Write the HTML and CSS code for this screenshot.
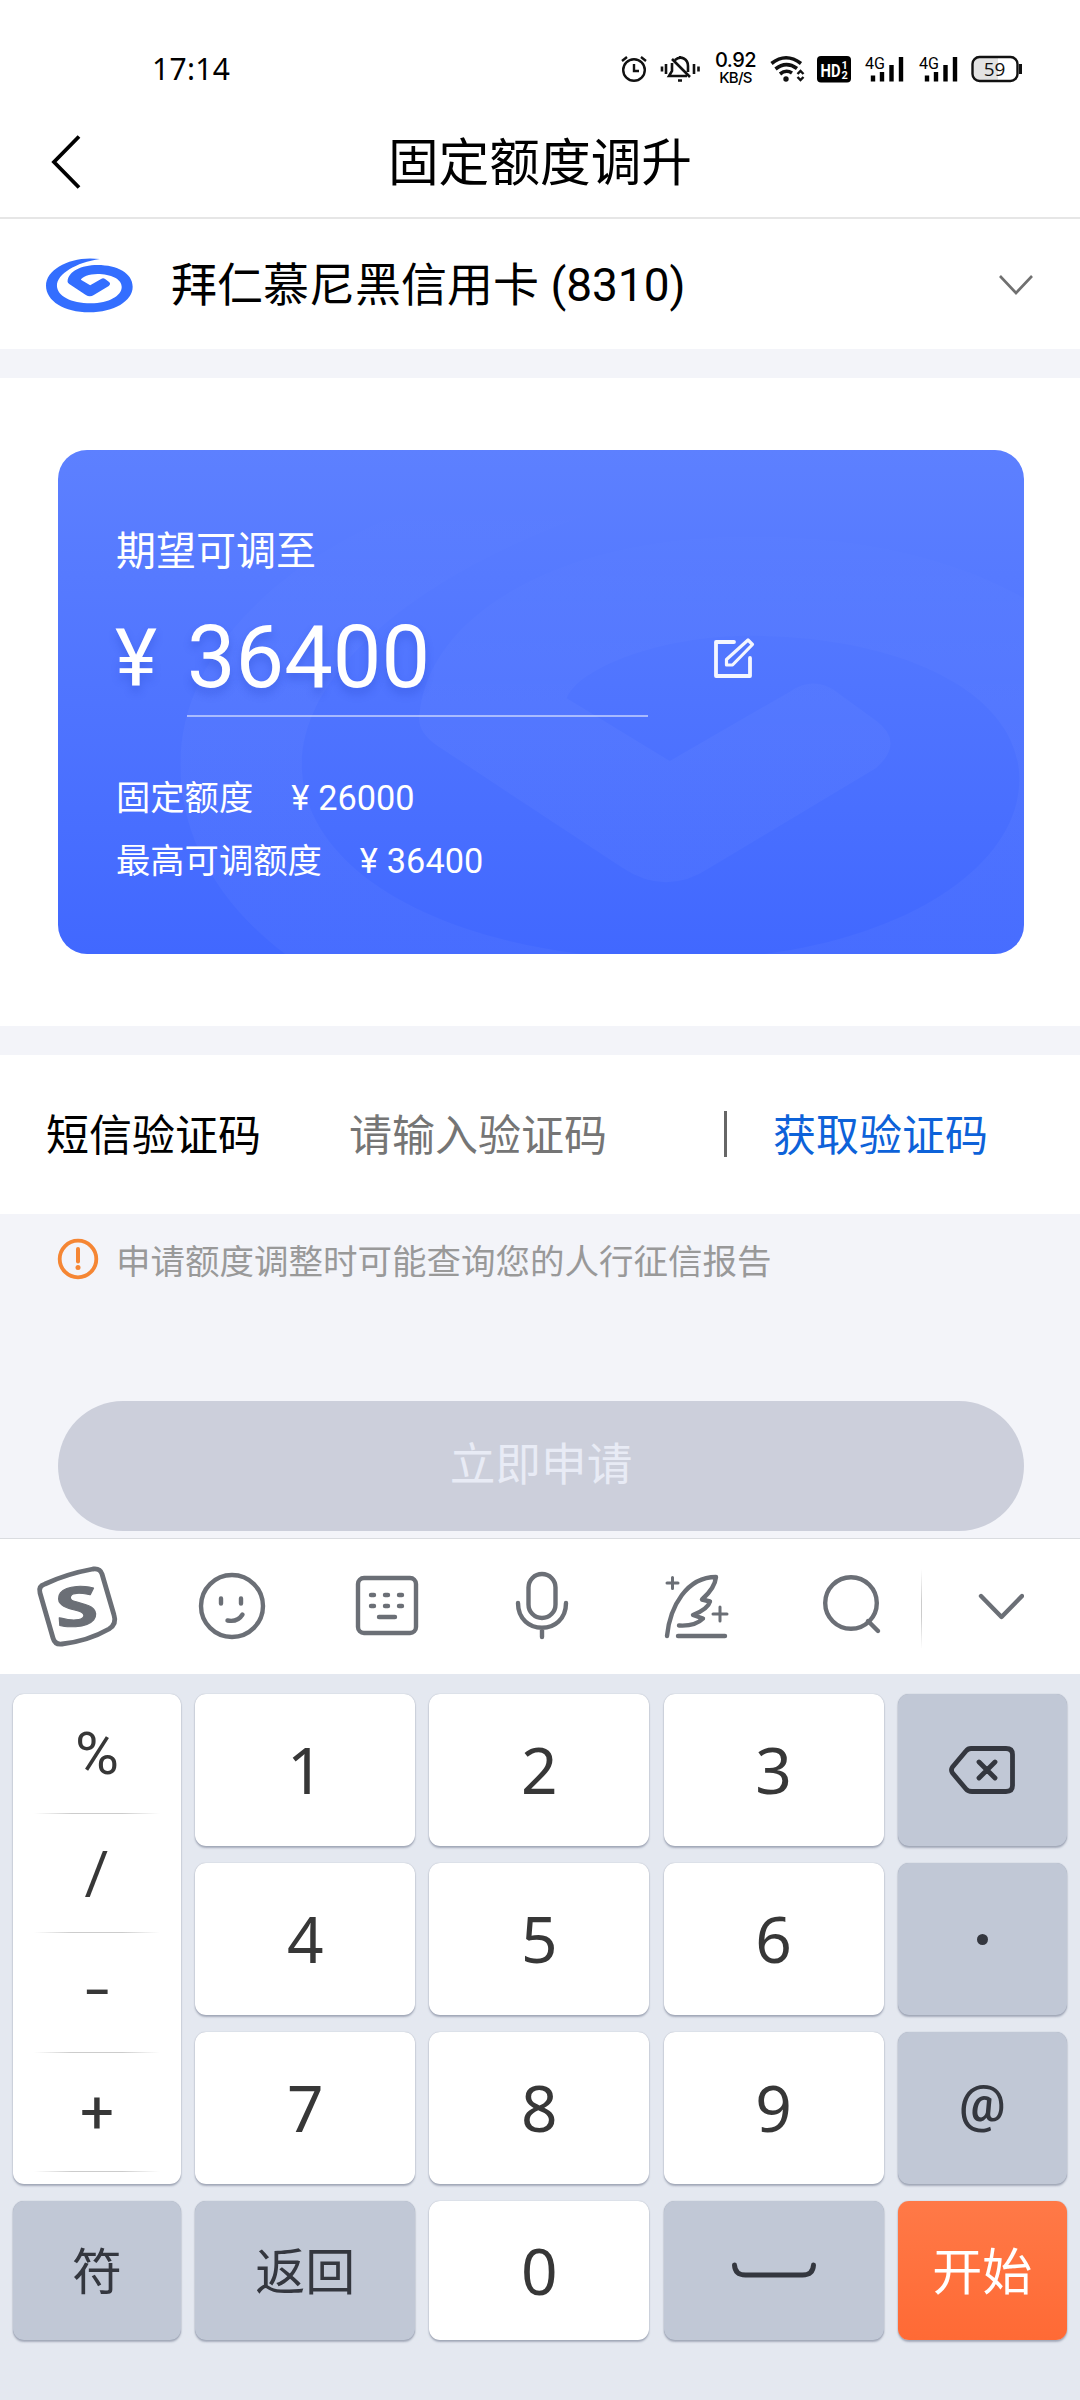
FILE: index.html
```html
<!DOCTYPE html>
<html lang="zh-CN">
<head>
<meta charset="utf-8">
<title>固定额度调升</title>
<link rel="stylesheet" href="styles.css">
</head>
<body>
<svg class="defs" width="0" height="0">
  <symbol id="swirl" viewBox="30 36 262 168">
    <path d="M192 42C110 30 30 70 30 122C30 168 85 202 160 202C235 202 291 168 291 125C291 85 245 60 185 60C135 60 98 80 95 108Q94 113 100 117L150 150Q162 158 174 150L219 123Q227 116 219 110L208 102Q202 98 196 102L163 121L135 104C138 96 160 87 185 87C225 87 258 102 258 126C258 152 220 175 165 175C105 175 63 152 63 122C63 88 120 52 192 42Z"/>
  </symbol>
  <linearGradient id="fade" x1="0" y1="0" x2="0" y2="1"><stop offset="0.05" stop-color="#fff" stop-opacity="0"/><stop offset="0.45" stop-color="#fff" stop-opacity="0.032"/></linearGradient>
</svg>

<div class="status">
  <span class="time">17:14</span>
  <svg class="s-alarm" width="28" height="28" viewBox="0 0 28 28" fill="none" stroke="#111" stroke-width="2.4"><circle cx="14" cy="15" r="10.8"/><path d="M14 9v7h5M2 6l5-4M26 6l-5-4"/></svg>
  <svg class="s-bell" width="40" height="28" viewBox="0 0 40 28" fill="none" stroke="#111" stroke-width="2.6"><path d="M12 8v8l-3 5h18M15 5c6-5 13-1 13 6v6M20 1v2M12 4l18 18M18 25.500h4M2 11.500v5M6 9v10M34 9v10M38.500 11.500v5"/></svg>
  <span class="s-speed"><b>0.92</b><i>KB/S</i></span>
  <svg class="s-wifi" width="35" height="28" viewBox="0 0 35 28" fill="none" stroke="#111" stroke-width="3.600"><path d="M1.500 8.500Q16 -3 31 8.500M5.500 14Q16 5.500 27 13.500M10 19Q16 14 22 18"/><circle cx="16" cy="24" r="2.700" fill="#111" stroke="none"/><path d="M27.500 19l3-3 3 3M27.500 22l3 3 3-3" stroke-width="2.400"/></svg>
  <svg class="s-hd" width="34" height="27" viewBox="0 0 34 27"><rect width="34" height="26.500" rx="4" fill="#000"/><text x="3.500" y="20.500" class="hd-text" textLength="20" lengthAdjust="spacingAndGlyphs">HD</text><text x="24.500" y="12.500" class="hd-num">1</text><text x="24.500" y="22.500" class="hd-num">2</text></svg>
  <svg class="s-sig" width="40" height="28" viewBox="0 0 40 28"><text x="0" y="14" class="net" textLength="20" lengthAdjust="spacingAndGlyphs">4G</text><path d="M8 20.500v6M17 17v9.500M26.500 10v16.500M36 2v24.500" stroke="#000" stroke-width="4.400"/></svg>
  <svg class="s-sig" width="40" height="28" viewBox="0 0 40 28"><text x="0" y="14" class="net" textLength="20" lengthAdjust="spacingAndGlyphs">4G</text><path d="M8 20.500v6M17 17v9.500M26.500 10v16.500M36 2v24.500" stroke="#000" stroke-width="4.400"/></svg>
  <svg class="s-bat" width="52" height="28" viewBox="0 0 52 28"><path d="M8 3h19v22H8q-6 0-6-6V9q0-6 6-6" fill="#e3e3e3"/><rect x="1.500" y="2" width="45" height="24" rx="7" fill="none" stroke="#111" stroke-width="2.400"/><path d="M49.500 9v10" stroke="#111" stroke-width="3"/><text x="23.500" y="20.500" text-anchor="middle" class="bat-text">59</text></svg>
</div>

<header class="nav">
  <svg class="back" width="32" height="56" viewBox="0 0 32 56" fill="none" stroke="#000" stroke-width="3.800"><path d="M29 2.500L4 28l25 25.500"/></svg>
  <h1>固定额度调升</h1>
</header>

<section class="account">
  <svg class="logo" width="87" height="56"><use href="#swirl"/></svg>
  <span class="account-name">拜仁慕尼黑信用卡 (8310)</span>
  <svg width="38" height="22" viewBox="0 0 38 22" fill="none" stroke="#707070" stroke-width="2.600"><path d="M3 2l16 17L35 2"/></svg>
</section>

<section class="limit">
  <div class="card">
    <svg class="watermark" viewBox="0 0 966 504"><g transform="translate(122.400 -3.800)"><use href="#swirl" width="964" height="622"/></g></svg>
    <p class="card-label">期望可调至</p>
    <div class="amount">
      <span class="yen">¥</span>
      <span class="value">36400</span>
      <svg class="edit" width="42" height="42" viewBox="0 0 42 42" fill="none" stroke="#f4f6ff" stroke-width="3.800" stroke-linejoin="round" stroke-linecap="round"><path d="M21 5H3v34h34V21"/><path d="M13.500 22.500L35 3l4.500 4.500L19.500 28h-6z" stroke-width="3.200"/></svg>
    </div>
    <p class="row"><span>固定额度</span><span><em>¥</em>26000</span></p>
    <p class="row"><span>最高可调额度</span><span><em>¥</em>36400</span></p>
  </div>
</section>

<section class="sms">
  <span class="sms-label">短信验证码</span>
  <span class="sms-input">请输入验证码</span>
  <span class="sms-bar"></span>
  <span class="sms-get">获取验证码</span>
</section>

<section class="apply">
  <p class="notice">
    <svg width="42" height="42" viewBox="0 0 42 42"><circle cx="21" cy="21" r="18.300" fill="none" stroke="#f58634" stroke-width="3.800"/><path d="M21 11v12.500" stroke="#f58634" stroke-width="4" stroke-linecap="round"/><circle cx="21" cy="29.500" r="2.500" fill="#f58634"/></svg>
    <span>申请额度调整时可能查询您的人行征信报告</span>
  </p>
  <div class="submit">立即申请</div>
</section>

<nav class="toolbar">
  <div><svg width="90" height="90" viewBox="0 0 90 90"><path d="M13 23Q6 25 8 32L21 77Q23 84 30 83Q56 80 77 68Q85 63 82 54L70 13Q68 7 61 8Q34 13 13 23Z" stroke-width="4.800"/><text class="sogou" transform="translate(46 65) rotate(-4) scale(1.500 1.050)" text-anchor="middle">S</text></svg></div>
  <div><svg width="70" height="70" viewBox="0 0 70 70"><circle cx="35" cy="35" r="31" /><path d="M24 27.500v5M44 27.500v5M30.500 49.500q10 2 15-6"/></svg></div>
  <div><svg width="70" height="70" viewBox="0 0 70 70"><rect x="6" y="7" width="58" height="55" rx="6"/><path d="M19 24h3M33 24h3M47 24h3M19 35h3M33 35h3M47 35h3M27 46h16"/></svg></div>
  <div><svg width="70" height="70" viewBox="0 0 70 70"><rect x="21.500" y="3" width="27" height="44" rx="13.500"/><path d="M11 32c0 33 48 33 48 0M35 57v9"/></svg></div>
  <div><svg width="70" height="70" viewBox="0 0 70 70"><path d="M5 65C8 35 25 6 54 6Q53 17 40 28.500L48 30.500Q46 38 31 44L41 47.500Q33 55.500 17 54.500M16 65h47"/><path d="M10.500 6.500v11M5 12h11M58 36v14M51 43h14" stroke-width="3"/></svg></div>
  <div><svg width="70" height="70" viewBox="0 0 70 70"><circle cx="38" cy="32" r="25.800"/><path d="M55 50l10 10"/></svg></div>
  <div class="hide"><svg width="46" height="28" viewBox="0 0 46 28"><path d="M3 3l20.500 21L44 3"/></svg></div>
</nav>

<main class="keyboard">
  <div class="key symbols"><span>%</span><span>/</span><span class="minus"><i>-</i></span><span>+</span></div>
  <div class="key">1</div><div class="key">2</div><div class="key">3</div>
  <div class="key fn"><svg width="66" height="50" viewBox="0 0 66 50" fill="none" stroke="#34373f" stroke-width="4.800" stroke-linejoin="round" stroke-linecap="round"><path d="M22 3.500h35q6.500 0 6.500 6v31q0 6-6.500 6H23Q19 46.500 17 44L3.500 28q-2-3 0-6L17 6q2-2.500 5-2.500zM30 17l16 16M46 17L30 33" /></svg></div>
  <div class="key">4</div><div class="key">5</div><div class="key">6</div>
  <div class="key fn"><span class="dot"></span></div>
  <div class="key">7</div><div class="key">8</div><div class="key">9</div>
  <div class="key fn at">@</div>
  <div class="key fn">符</div>
  <div class="key fn">返回</div>
  <div class="key">0</div>
  <div class="key fn"><svg width="86" height="18" viewBox="0 0 86 18" fill="none" stroke="#34373f" stroke-width="5" stroke-linecap="round"><path d="M3.500 3q.5 10 11 10h57q10.500 0 11-10"/></svg></div>
  <div class="key go">开始</div>
</main>
</body>
</html>
```
FILE: styles.css
```css
* { box-sizing: border-box; }
body {
  margin: 0;
  width: 1080px;
  height: 2400px;
  overflow: hidden;
  display: flex;
  flex-direction: column;
  background: #f3f4f9;
  color: #000;
  font-family: Roboto, "Noto Sans CJK SC", sans-serif;
}
p, h1 { margin: 0; font-weight: 400; }
.defs { position: absolute; }

/* status bar */
.status {
  height: 112px;
  padding: 26px 0 0 152px;
  display: flex;
  align-items: center;
  background: #fff;
  font-family: "Noto Sans", sans-serif;
}
.status svg { flex: none; overflow: visible; }
.time { width: 468px; font-size: 30px; letter-spacing: .3px; line-height: 40px; }
.s-bell { margin-left: 12px; }
.s-speed { width: 41px; margin-left: 15px; display: flex; flex-direction: column; align-items: center; font-family: Inter, sans-serif; }
.s-speed b { font-size: 20px; font-weight: 500; line-height: 17px; letter-spacing: -.5px; }
.s-speed i { font-size: 15px; font-style: normal; font-weight: 500; line-height: 17px; letter-spacing: -.7px; }
.s-wifi { margin-left: 14px; }
.s-hd { margin-left: 12px; }
.s-sig { margin-left: 14px; }
.s-bat { margin-left: 12px; }
.hd-text { font: 700 19px Roboto, sans-serif; fill: #fff; }
.hd-num { font: 700 11px Roboto, sans-serif; fill: #fff; }
.net { font: 400 17px Roboto, sans-serif; fill: #000; }
.bat-text { font: 400 19px "Open Sans", sans-serif; fill: #111; }

/* title bar */
.nav {
  height: 107px;
  padding-bottom: 5px;
  display: grid;
  grid-template-columns: 130px 1fr 130px;
  align-items: center;
  background: #fff;
  border-bottom: 2px solid #e6e6e6;
}
.back { margin-left: 50px; }
.nav h1 { padding-top: 4px; text-align: center; font-size: 50.700px; line-height: 60px; }

/* account selector */
.account {
  height: 130px;
  padding: 2px 45px 0 46px;
  display: flex;
  align-items: center;
  background: #fff;
}
.logo { fill: #336eff; }
.account-name { flex: 1; margin-left: 38px; font-size: 46px; line-height: 60px; }

/* limit card */
.limit { margin-top: 29px; height: 648px; padding: 72px 56px 0 58px; background: #fff; }
.card {
  position: relative;
  height: 504px;
  padding: 78px 58px 0;
  border-radius: 29px;
  overflow: hidden;
  color: #fff;
  background: linear-gradient(#5d80ff, #4168ff);
}
.watermark { position: absolute; inset: 0; fill: url(#fade); }
.card > p, .amount { position: relative; }
.card-label { font-size: 40px; line-height: 48px; }
.amount { height: 106px; margin-top: 35px; display: flex; }
.yen, .value { text-shadow: 0 6px 8px rgba(30, 60, 190, .28); line-height: 94px; }
.yen { width: 71px; font-size: 80px; margin-left: -1px; padding-top: 1px; }
.value { width: 461px; height: 106px; border-bottom: 2px solid rgba(255, 255, 255, .5); font-size: 86.500px; margin-left: 1px; }
.edit { margin: 26px 0 0 65px; }
.row { display: flex; gap: 37px; font-size: 34.300px; line-height: 63px; }
.amount + .row { margin-top: 50px; }
.row em { font-style: normal; margin: 0 9px 0 1px; }

/* sms code */
.sms {
  height: 159px;
  margin-top: 29px;
  padding: 3px 0 0 46px;
  display: flex;
  align-items: center;
  background: #fff;
  font-size: 43px;
  line-height: 46px;
}
.sms-label { width: 303px; }
.sms-input { width: 375px; color: #757575; }
.sms-bar { width: 3px; height: 46px; background: #666; margin-top: -4px; }
.sms-get { padding-left: 46px; color: #0d62d9; }

/* apply */
.apply { height: 324px; padding: 23px 56px 0 58px; }
.notice { display: flex; align-items: center; gap: 17px; margin-left: -1px; height: 44px; font-size: 34.500px; color: #999; }
.submit {
  height: 130px;
  margin-top: 120px;
  border-radius: 65px;
  background: #cccfdb;
  color: #e8ebf5;
  font-size: 45.700px;
  line-height: 130px;
  text-align: center;
}

/* input method toolbar */
.toolbar {
  height: 136px;
  display: grid;
  grid-template-columns: repeat(5, 155px) 146px 159px;
  background: #fff;
  border-top: 1px solid #dadce0;
}
.toolbar div { display: flex; align-items: center; justify-content: center; }
.toolbar div:not(.hide) svg { margin: -1px 1px 0 0; }
.toolbar svg { fill: none; stroke: #6b6f76; stroke-width: 4.400px; stroke-linecap: round; stroke-linejoin: round; }
.toolbar .sogou { fill: #6b6f76; stroke: #6b6f76; stroke-width: 1px; font: 700 52px "Open Sans", sans-serif; }
.toolbar .hide { background: linear-gradient(transparent, #ccc 40%, #ccc 60%, transparent) 0 30px / 1px 80px no-repeat; }

/* keypad */
.keyboard {
  flex: 1;
  padding: 20px 13px 0 13px;
  display: grid;
  grid-template-columns: 168px 220px 220px 220px 169px;
  grid-template-rows: 152px 152px 152px 139px;
  gap: 17px 14.200px;
  align-content: start;
  background: #e4e8f0;
}
.key {
  display: flex;
  align-items: center;
  justify-content: center;
  border-radius: 11px;
  background: #fff;
  color: #373737;
  font-family: "Noto Sans", "Noto Sans CJK SC", sans-serif;
  font-size: 64px;
  line-height: 80px;
  box-shadow: 0 2px 2px rgba(90, 100, 125, .45), 0 0 1px rgba(90, 100, 125, .5);
}
.fn { background: #c1c8d6; color: #34373f; font-size: 50px; }
.go { background: linear-gradient(#ff7947, #ff6a35); color: #fff; font-size: 50px; }
.at { font-family: Roboto, sans-serif; font-size: 52px; font-weight: 500; padding-bottom: 8px; }
.dot { width: 11px; height: 11px; border-radius: 50%; background: #34373f; }
.symbols { grid-row: span 3; flex-direction: column; justify-content: flex-start; font-family: Roboto, sans-serif; font-size: 60px; }
.symbols span {
  width: 126px;
  height: 119.600px;
  line-height: 119px;
  text-align: center;
  background: linear-gradient(90deg, transparent, #ccc 30%, #ccc 70%, transparent) bottom / 100% 1px no-repeat;
}
.symbols span:nth-child(2) { line-height: 117px; }
.minus i { display: inline-block; font-style: normal; transform: translateY(-3px) scaleX(1.450); }
```
